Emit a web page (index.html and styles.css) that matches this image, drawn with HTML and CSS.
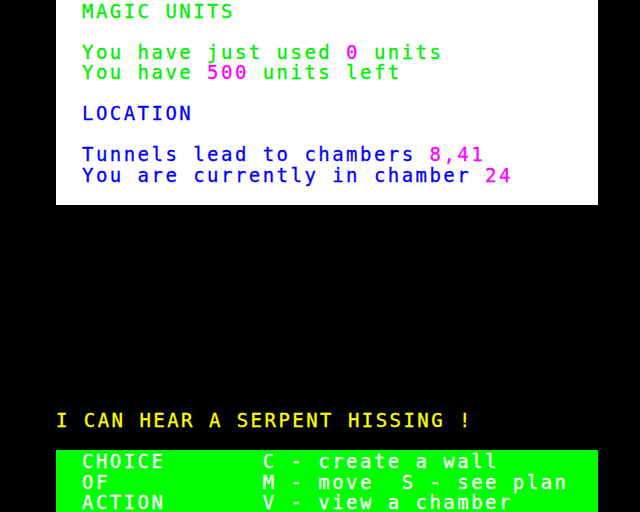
FILE: index.html
```html
<!DOCTYPE html>
<html>
<head>
<meta charset="utf-8">
<link rel="stylesheet" href="styles.css">
</head>
<body>
<div class="screen">
  <section class="panel panel-white">
    <div class="line green">MAGIC UNITS</div>
    <div class="line"></div>
    <div class="line green">You have just used <span class="magenta">0</span> units</div>
    <div class="line green">You have <span class="magenta">500</span> units left</div>
    <div class="line"></div>
    <div class="line blue">LOCATION</div>
    <div class="line"></div>
    <div class="line blue">Tunnels lead to chambers <span class="magenta">8,41</span></div>
    <div class="line blue">You are currently in chamber <span class="magenta">24</span></div>
    <div class="line"></div>
  </section>
  <div class="gap"></div>
  <div class="line message">I CAN HEAR A SERPENT HISSING !</div>
  <div class="line"></div>
  <section class="panel panel-green">
    <div class="line white">CHOICE       C - create a wall</div>
    <div class="line white">OF           M - move  S - see plan</div>
    <div class="line white">ACTION       V - view a chamber</div>
  </section>
</div>
</body>
</html>
```
FILE: styles.css
```css
html, body {
  margin: 0;
  padding: 0;
  background: #000;
}
.screen {
  width: 640px;
  height: 512px;
  overflow: hidden;
  display: flex;
  flex-direction: column;
  font-family: "DejaVu Sans Mono", monospace;
  font-size: 19px;
  letter-spacing: 2.46px;
}
.line {
  height: 20.48px;
  line-height: 22px;
  white-space: pre;
  -webkit-text-stroke: 0.3px currentColor;
}
.panel {
  margin-left: 56px;
  width: 542px;
  padding-left: 26px;
  box-sizing: border-box;
}
.panel-white { background: #fff; }
.panel-green { background: #00ff00; }
.gap { height: 204.8px; flex: none; }
.message {
  padding-left: 56px;
  color: #ffff00;
}
.green { color: #00f000; }
.blue { color: #0000ff; }
.magenta { color: #ff00ff; }
.white { color: #fff; }
```
